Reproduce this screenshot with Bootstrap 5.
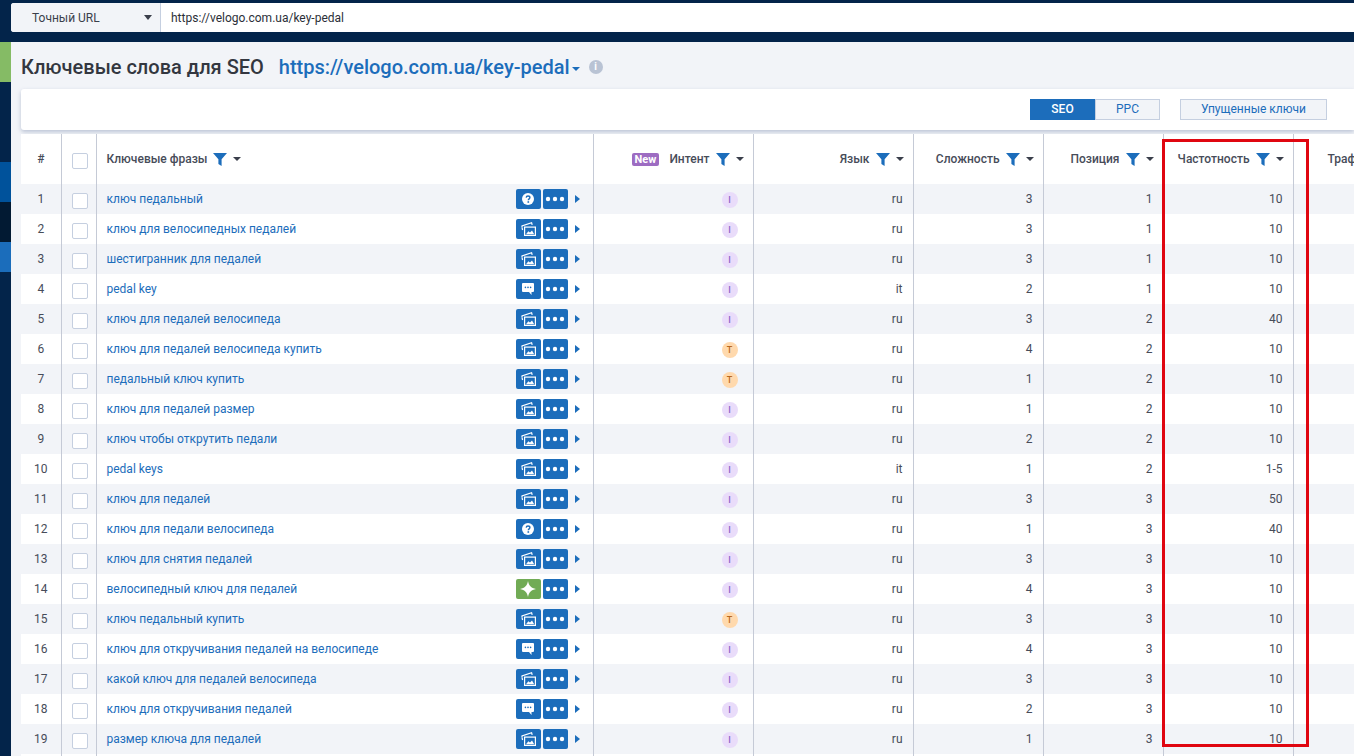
<!DOCTYPE html>
<html lang="ru">
<head>
<meta charset="utf-8">
<title>Ключевые слова для SEO</title>
<link href="https://cdn.jsdelivr.net/npm/bootstrap@5.3.0/dist/css/bootstrap.min.css" rel="stylesheet">
<style>
html,body{height:756px;overflow:hidden}
body{background:#03244a;font-family:Roboto,"Liberation Sans",sans-serif;font-size:12px;color:#3a3f4b;position:relative}
.topbar{height:42px;padding:3px 0 0 11px}
.urlbox{height:29px;background:#fff;border-radius:3px 0 0 3px}
.urltype{width:150px;background:#f2f4f8;border-right:1px solid #c5cfe0;padding-left:21px;padding-right:8px;border-radius:3px 0 0 3px;color:#3a3f4b}
.urltext{padding-left:10px;color:#2b2f38}
.tri{display:inline-block;width:0;height:0;border-left:4px solid transparent;border-right:4px solid transparent;border-top:4px solid #3a3f4b}
.urltype .tri{border-left-width:4.5px;border-right-width:4.5px;border-top-width:5px}
.shell{height:714px}
.railnav{width:11px;flex:none}
.seg-g{height:40px;background:#85bb65}
.seg-n{height:80px;background:#03244a}
.seg-b{height:40px;background:#00529b}
.seg-d{height:40px;background:#021a33}
.seg-l{height:30px;background:#1b6dbb}
.mainarea{background:#f2f4f8;width:1343px;padding-left:10px;overflow:hidden}
.titlerow{height:47px;padding-top:3px}
.pagetitle{font-size:20px;font-weight:500;color:#333740;margin:0;line-height:24px}
.pagelink{font-size:20px;font-weight:500;color:#1c6dbb;text-decoration:none;margin-left:15px;line-height:24px}
.pagelink+.tri{border-top-color:#1c6dbb;margin-left:2px;margin-top:3px}
.infodot{width:14px;height:14px;border-radius:50%;background:#b9c3d4;color:#fff;font-size:10px;font-weight:700;line-height:14px;text-align:center;margin-left:9px}
.toolcard{height:41px;background:#fff;border-radius:3px 0 0 3px;box-shadow:0 2px 4px rgba(120,135,170,.45);padding-right:27px;margin-bottom:4px}
.seg-btn{height:21px;width:65px;font-size:12px;border:1px solid #c5cfe0;background:#f2f4f8;color:#1c6dbb;padding:0;border-radius:0;line-height:19px}
.seg-btn.on{background:#1c6dbb;color:#fff;border-color:#1c6dbb;font-weight:500}
.seg-btn.wide{width:147px;margin-left:20px}
.kwtable{table-layout:fixed;width:1400px;border-collapse:collapse;background:#fff;margin:0}
.kwtable th,.kwtable td{padding:0 10px;border-right:1px solid #c5cad6;font-size:12px;white-space:nowrap;vertical-align:middle;border-bottom:0;box-shadow:none}
.kwtable th{height:50px;font-weight:500;color:#474c59;background:#fff}
.kwtable th.text-end{padding-right:9px}
.kwtable td{height:30px;color:#474c59}
.kwtable tbody tr:nth-child(odd) td{background:#f2f4f8}
.kwtable tbody tr:nth-child(even) td{background:#fff}
.kwtable th:last-child,.kwtable td:last-child{border-right:0}
.kwtable a{color:#1c6dbb;text-decoration:none}
.kwtable .nocell{text-align:center;padding:0 0 0 2px}
.chk{display:block;width:16px;height:16px;border:1px solid #c5cfe0;border-radius:2px;background:#fff;margin:3px auto 0}
.fil{width:14px;height:13px;margin:0 6px 0 5px;vertical-align:-2px}
th.text-end .fil{margin-left:6px}
.hd{display:inline-flex;align-items:center}
.newtag{background:#9d6cc2;color:#fff;font-size:11px;font-weight:700;border-radius:2px;padding:0 3px;line-height:13px;height:13px;margin-right:10px}
.act{width:25px;height:20px;background:#1c6dbb;border-radius:2px;display:inline-flex;align-items:center;justify-content:center;flex:none}
.act.star{background:#71ab55}
.actwrap{gap:2px}
.arrow{width:0;height:0;border-top:4px solid transparent;border-bottom:4px solid transparent;border-left:5px solid #1c6dbb;margin-left:7px;margin-right:3px}
.intent{display:inline-block;width:16px;height:16px;border-radius:50%;text-align:center;font-size:9px;line-height:16px;font-weight:500}
.int-i{background:#e9dcfa;color:#8f63c9}
.int-t{background:#ffd9ad;color:#b9681c}
.kwtable .int-cell{padding-right:15px;text-align:right}
.redframe{position:absolute;left:1162px;top:139px;width:147px;height:608px;border:3px solid #e00610;pointer-events:none}
</style>
</head>
<body>
<svg width="0" height="0" class="position-absolute">
<defs>
<symbol id="i-fil" viewBox="0 0 14 13"><path d="M0 0h14L8.600 6.200V13L5.400 11V6.200z" fill="#1c6dbb"/></symbol>
<symbol id="i-dots" viewBox="0 0 20 6"><circle cx="3" cy="3" r="2.2" fill="#fff"/><circle cx="10" cy="3" r="2.2" fill="#fff"/><circle cx="17" cy="3" r="2.2" fill="#fff"/></symbol>
<symbol id="i-pic" viewBox="0 0 15 14"><path d="M1 5.600V3.900L10.600.8l.6 2" fill="none" stroke="#fff" stroke-width="1.2"/><path d="M1 5.600l.6 2.400" fill="none" stroke="#fff" stroke-width="1.2"/><rect x="3.600" y="5.100" width="10.800" height="8.300" fill="none" stroke="#fff" stroke-width="1.2"/><path d="M5 12.200l2.400-3 1.600 1.400 2-2.200 2.200 3.800z" fill="#fff"/></symbol>
<symbol id="i-q" viewBox="0 0 12 12"><circle cx="6" cy="6" r="6" fill="#fff"/><path d="M4.200 4.600C4.300 3.500 5 3 6 3s1.900.6 1.900 1.600c0 1.300-1.600 1.300-1.600 2.700" fill="none" stroke="#1c6dbb" stroke-width="1.4"/><rect x="5.500" y="8.200" width="1.600" height="1.600" fill="#1c6dbb"/></symbol>
<symbol id="i-chat" viewBox="0 0 12 12"><path d="M1 0h10a1 1 0 0 1 1 1v7a1 1 0 0 1-1 1H9.500v3L7 9H1a1 1 0 0 1-1-1V1a1 1 0 0 1 1-1z" fill="#fff"/><circle cx="3.400" cy="4.400" r=".8" fill="#1c6dbb"/><circle cx="6" cy="4.400" r=".8" fill="#1c6dbb"/><circle cx="8.600" cy="4.400" r=".8" fill="#1c6dbb"/></symbol>
<symbol id="i-star" viewBox="0 0 16 16"><path d="M8 0C8.800 4.600 11 7 16 8c-5 1-7.200 3.400-8 8-.8-4.600-3-7-8-8 5-1 7.200-3.400 8-8z" fill="#fff"/></symbol>
</defs>
</svg>

<div class="topbar">
  <div class="urlbox d-flex align-items-center">
    <div class="urltype d-flex align-items-center justify-content-between h-100"><span>Точный URL</span><span class="tri"></span></div>
    <div class="urltext">https://velogo.com.ua/key-pedal</div>
  </div>
</div>

<div class="shell d-flex">
  <div class="railnav d-flex flex-column">
    <div class="seg-g"></div><div class="seg-n"></div><div class="seg-b"></div><div class="seg-d"></div><div class="seg-l"></div>
  </div>
  <div class="mainarea">
    <div class="titlerow d-flex align-items-center">
      <h1 class="pagetitle">Ключевые слова для SEO</h1>
      <a class="pagelink" href="#">https://velogo.com.ua/key-pedal</a><span class="tri"></span>
      <span class="infodot">i</span>
    </div>
    <div class="toolcard d-flex align-items-center justify-content-end">
      <button class="btn seg-btn on" type="button">SEO</button>
      <button class="btn seg-btn" type="button">PPC</button>
      <button class="btn seg-btn wide" type="button">Упущенные ключи</button>
    </div>
    <table class="table kwtable">
      <colgroup><col style="width:40px"><col style="width:35px"><col style="width:497px"><col style="width:160px"><col style="width:160px"><col style="width:130px"><col style="width:120px"><col style="width:130px"><col></colgroup>
      <thead>
        <tr>
          <th class="text-center">#</th>
          <th class="nocell"><span class="chk"></span></th>
          <th><span class="hd">Ключевые фразы<svg class="fil"><use href="#i-fil"/></svg><span class="tri"></span></span></th>
          <th class="text-end"><span class="hd"><span class="newtag">New</span>Интент<svg class="fil"><use href="#i-fil"/></svg><span class="tri"></span></span></th>
          <th class="text-end"><span class="hd">Язык<svg class="fil"><use href="#i-fil"/></svg><span class="tri"></span></span></th>
          <th class="text-end"><span class="hd">Сложность<svg class="fil"><use href="#i-fil"/></svg><span class="tri"></span></span></th>
          <th class="text-end"><span class="hd">Позиция<svg class="fil"><use href="#i-fil"/></svg><span class="tri"></span></span></th>
          <th class="text-end"><span class="hd">Частотность<svg class="fil"><use href="#i-fil"/></svg><span class="tri"></span></span></th>
          <th><span class="hd ms-4">Трафик<svg class="fil"><use href="#i-fil"/></svg><span class="tri"></span></span></th>
        </tr>
      </thead>
      <tbody>
<tr><td class="text-center">1</td><td class="nocell"><span class="chk"></span></td><td><div class="d-flex align-items-center"><a class="me-auto" href="#">ключ педальный</a><div class="d-flex actwrap"><span class="act"><svg width="12" height="12"><use href="#i-q"/></svg></span><span class="act"><svg width="20" height="6"><use href="#i-dots"/></svg></span></div><span class="arrow"></span></div></td><td class="int-cell"><span class="intent int-i">I</span></td><td class="text-end">ru</td><td class="text-end">3</td><td class="text-end">1</td><td class="text-end">10</td><td></td></tr>
<tr><td class="text-center">2</td><td class="nocell"><span class="chk"></span></td><td><div class="d-flex align-items-center"><a class="me-auto" href="#">ключ для велосипедных педалей</a><div class="d-flex actwrap"><span class="act"><svg width="15" height="14"><use href="#i-pic"/></svg></span><span class="act"><svg width="20" height="6"><use href="#i-dots"/></svg></span></div><span class="arrow"></span></div></td><td class="int-cell"><span class="intent int-i">I</span></td><td class="text-end">ru</td><td class="text-end">3</td><td class="text-end">1</td><td class="text-end">10</td><td></td></tr>
<tr><td class="text-center">3</td><td class="nocell"><span class="chk"></span></td><td><div class="d-flex align-items-center"><a class="me-auto" href="#">шестигранник для педалей</a><div class="d-flex actwrap"><span class="act"><svg width="15" height="14"><use href="#i-pic"/></svg></span><span class="act"><svg width="20" height="6"><use href="#i-dots"/></svg></span></div><span class="arrow"></span></div></td><td class="int-cell"><span class="intent int-i">I</span></td><td class="text-end">ru</td><td class="text-end">3</td><td class="text-end">1</td><td class="text-end">10</td><td></td></tr>
<tr><td class="text-center">4</td><td class="nocell"><span class="chk"></span></td><td><div class="d-flex align-items-center"><a class="me-auto" href="#">pedal key</a><div class="d-flex actwrap"><span class="act"><svg width="12" height="12"><use href="#i-chat"/></svg></span><span class="act"><svg width="20" height="6"><use href="#i-dots"/></svg></span></div><span class="arrow"></span></div></td><td class="int-cell"><span class="intent int-i">I</span></td><td class="text-end">it</td><td class="text-end">2</td><td class="text-end">1</td><td class="text-end">10</td><td></td></tr>
<tr><td class="text-center">5</td><td class="nocell"><span class="chk"></span></td><td><div class="d-flex align-items-center"><a class="me-auto" href="#">ключ для педалей велосипеда</a><div class="d-flex actwrap"><span class="act"><svg width="15" height="14"><use href="#i-pic"/></svg></span><span class="act"><svg width="20" height="6"><use href="#i-dots"/></svg></span></div><span class="arrow"></span></div></td><td class="int-cell"><span class="intent int-i">I</span></td><td class="text-end">ru</td><td class="text-end">3</td><td class="text-end">2</td><td class="text-end">40</td><td></td></tr>
<tr><td class="text-center">6</td><td class="nocell"><span class="chk"></span></td><td><div class="d-flex align-items-center"><a class="me-auto" href="#">ключ для педалей велосипеда купить</a><div class="d-flex actwrap"><span class="act"><svg width="15" height="14"><use href="#i-pic"/></svg></span><span class="act"><svg width="20" height="6"><use href="#i-dots"/></svg></span></div><span class="arrow"></span></div></td><td class="int-cell"><span class="intent int-t">T</span></td><td class="text-end">ru</td><td class="text-end">4</td><td class="text-end">2</td><td class="text-end">10</td><td></td></tr>
<tr><td class="text-center">7</td><td class="nocell"><span class="chk"></span></td><td><div class="d-flex align-items-center"><a class="me-auto" href="#">педальный ключ купить</a><div class="d-flex actwrap"><span class="act"><svg width="15" height="14"><use href="#i-pic"/></svg></span><span class="act"><svg width="20" height="6"><use href="#i-dots"/></svg></span></div><span class="arrow"></span></div></td><td class="int-cell"><span class="intent int-t">T</span></td><td class="text-end">ru</td><td class="text-end">1</td><td class="text-end">2</td><td class="text-end">10</td><td></td></tr>
<tr><td class="text-center">8</td><td class="nocell"><span class="chk"></span></td><td><div class="d-flex align-items-center"><a class="me-auto" href="#">ключ для педалей размер</a><div class="d-flex actwrap"><span class="act"><svg width="15" height="14"><use href="#i-pic"/></svg></span><span class="act"><svg width="20" height="6"><use href="#i-dots"/></svg></span></div><span class="arrow"></span></div></td><td class="int-cell"><span class="intent int-i">I</span></td><td class="text-end">ru</td><td class="text-end">1</td><td class="text-end">2</td><td class="text-end">10</td><td></td></tr>
<tr><td class="text-center">9</td><td class="nocell"><span class="chk"></span></td><td><div class="d-flex align-items-center"><a class="me-auto" href="#">ключ чтобы открутить педали</a><div class="d-flex actwrap"><span class="act"><svg width="15" height="14"><use href="#i-pic"/></svg></span><span class="act"><svg width="20" height="6"><use href="#i-dots"/></svg></span></div><span class="arrow"></span></div></td><td class="int-cell"><span class="intent int-i">I</span></td><td class="text-end">ru</td><td class="text-end">2</td><td class="text-end">2</td><td class="text-end">10</td><td></td></tr>
<tr><td class="text-center">10</td><td class="nocell"><span class="chk"></span></td><td><div class="d-flex align-items-center"><a class="me-auto" href="#">pedal keys</a><div class="d-flex actwrap"><span class="act"><svg width="15" height="14"><use href="#i-pic"/></svg></span><span class="act"><svg width="20" height="6"><use href="#i-dots"/></svg></span></div><span class="arrow"></span></div></td><td class="int-cell"><span class="intent int-i">I</span></td><td class="text-end">it</td><td class="text-end">1</td><td class="text-end">2</td><td class="text-end">1-5</td><td></td></tr>
<tr><td class="text-center">11</td><td class="nocell"><span class="chk"></span></td><td><div class="d-flex align-items-center"><a class="me-auto" href="#">ключ для педалей</a><div class="d-flex actwrap"><span class="act"><svg width="15" height="14"><use href="#i-pic"/></svg></span><span class="act"><svg width="20" height="6"><use href="#i-dots"/></svg></span></div><span class="arrow"></span></div></td><td class="int-cell"><span class="intent int-i">I</span></td><td class="text-end">ru</td><td class="text-end">3</td><td class="text-end">3</td><td class="text-end">50</td><td></td></tr>
<tr><td class="text-center">12</td><td class="nocell"><span class="chk"></span></td><td><div class="d-flex align-items-center"><a class="me-auto" href="#">ключ для педали велосипеда</a><div class="d-flex actwrap"><span class="act"><svg width="12" height="12"><use href="#i-q"/></svg></span><span class="act"><svg width="20" height="6"><use href="#i-dots"/></svg></span></div><span class="arrow"></span></div></td><td class="int-cell"><span class="intent int-i">I</span></td><td class="text-end">ru</td><td class="text-end">1</td><td class="text-end">3</td><td class="text-end">40</td><td></td></tr>
<tr><td class="text-center">13</td><td class="nocell"><span class="chk"></span></td><td><div class="d-flex align-items-center"><a class="me-auto" href="#">ключ для снятия педалей</a><div class="d-flex actwrap"><span class="act"><svg width="15" height="14"><use href="#i-pic"/></svg></span><span class="act"><svg width="20" height="6"><use href="#i-dots"/></svg></span></div><span class="arrow"></span></div></td><td class="int-cell"><span class="intent int-i">I</span></td><td class="text-end">ru</td><td class="text-end">3</td><td class="text-end">3</td><td class="text-end">10</td><td></td></tr>
<tr><td class="text-center">14</td><td class="nocell"><span class="chk"></span></td><td><div class="d-flex align-items-center"><a class="me-auto" href="#">велосипедный ключ для педалей</a><div class="d-flex actwrap"><span class="act star"><svg width="16" height="16"><use href="#i-star"/></svg></span><span class="act"><svg width="20" height="6"><use href="#i-dots"/></svg></span></div><span class="arrow"></span></div></td><td class="int-cell"><span class="intent int-i">I</span></td><td class="text-end">ru</td><td class="text-end">4</td><td class="text-end">3</td><td class="text-end">10</td><td></td></tr>
<tr><td class="text-center">15</td><td class="nocell"><span class="chk"></span></td><td><div class="d-flex align-items-center"><a class="me-auto" href="#">ключ педальный купить</a><div class="d-flex actwrap"><span class="act"><svg width="15" height="14"><use href="#i-pic"/></svg></span><span class="act"><svg width="20" height="6"><use href="#i-dots"/></svg></span></div><span class="arrow"></span></div></td><td class="int-cell"><span class="intent int-t">T</span></td><td class="text-end">ru</td><td class="text-end">3</td><td class="text-end">3</td><td class="text-end">10</td><td></td></tr>
<tr><td class="text-center">16</td><td class="nocell"><span class="chk"></span></td><td><div class="d-flex align-items-center"><a class="me-auto" href="#">ключ для откручивания педалей на велосипеде</a><div class="d-flex actwrap"><span class="act"><svg width="12" height="12"><use href="#i-chat"/></svg></span><span class="act"><svg width="20" height="6"><use href="#i-dots"/></svg></span></div><span class="arrow"></span></div></td><td class="int-cell"><span class="intent int-i">I</span></td><td class="text-end">ru</td><td class="text-end">4</td><td class="text-end">3</td><td class="text-end">10</td><td></td></tr>
<tr><td class="text-center">17</td><td class="nocell"><span class="chk"></span></td><td><div class="d-flex align-items-center"><a class="me-auto" href="#">какой ключ для педалей велосипеда</a><div class="d-flex actwrap"><span class="act"><svg width="15" height="14"><use href="#i-pic"/></svg></span><span class="act"><svg width="20" height="6"><use href="#i-dots"/></svg></span></div><span class="arrow"></span></div></td><td class="int-cell"><span class="intent int-i">I</span></td><td class="text-end">ru</td><td class="text-end">3</td><td class="text-end">3</td><td class="text-end">10</td><td></td></tr>
<tr><td class="text-center">18</td><td class="nocell"><span class="chk"></span></td><td><div class="d-flex align-items-center"><a class="me-auto" href="#">ключ для откручивания педалей</a><div class="d-flex actwrap"><span class="act"><svg width="12" height="12"><use href="#i-chat"/></svg></span><span class="act"><svg width="20" height="6"><use href="#i-dots"/></svg></span></div><span class="arrow"></span></div></td><td class="int-cell"><span class="intent int-i">I</span></td><td class="text-end">ru</td><td class="text-end">2</td><td class="text-end">3</td><td class="text-end">10</td><td></td></tr>
<tr><td class="text-center">19</td><td class="nocell"><span class="chk"></span></td><td><div class="d-flex align-items-center"><a class="me-auto" href="#">размер ключа для педалей</a><div class="d-flex actwrap"><span class="act"><svg width="15" height="14"><use href="#i-pic"/></svg></span><span class="act"><svg width="20" height="6"><use href="#i-dots"/></svg></span></div><span class="arrow"></span></div></td><td class="int-cell"><span class="intent int-i">I</span></td><td class="text-end">ru</td><td class="text-end">1</td><td class="text-end">3</td><td class="text-end">10</td><td></td></tr>
<tr><td></td><td></td><td></td><td></td><td></td><td></td><td></td><td></td><td></td></tr>
      </tbody>
    </table>
  </div>
</div>
<div class="redframe"></div>
</body>
</html>
